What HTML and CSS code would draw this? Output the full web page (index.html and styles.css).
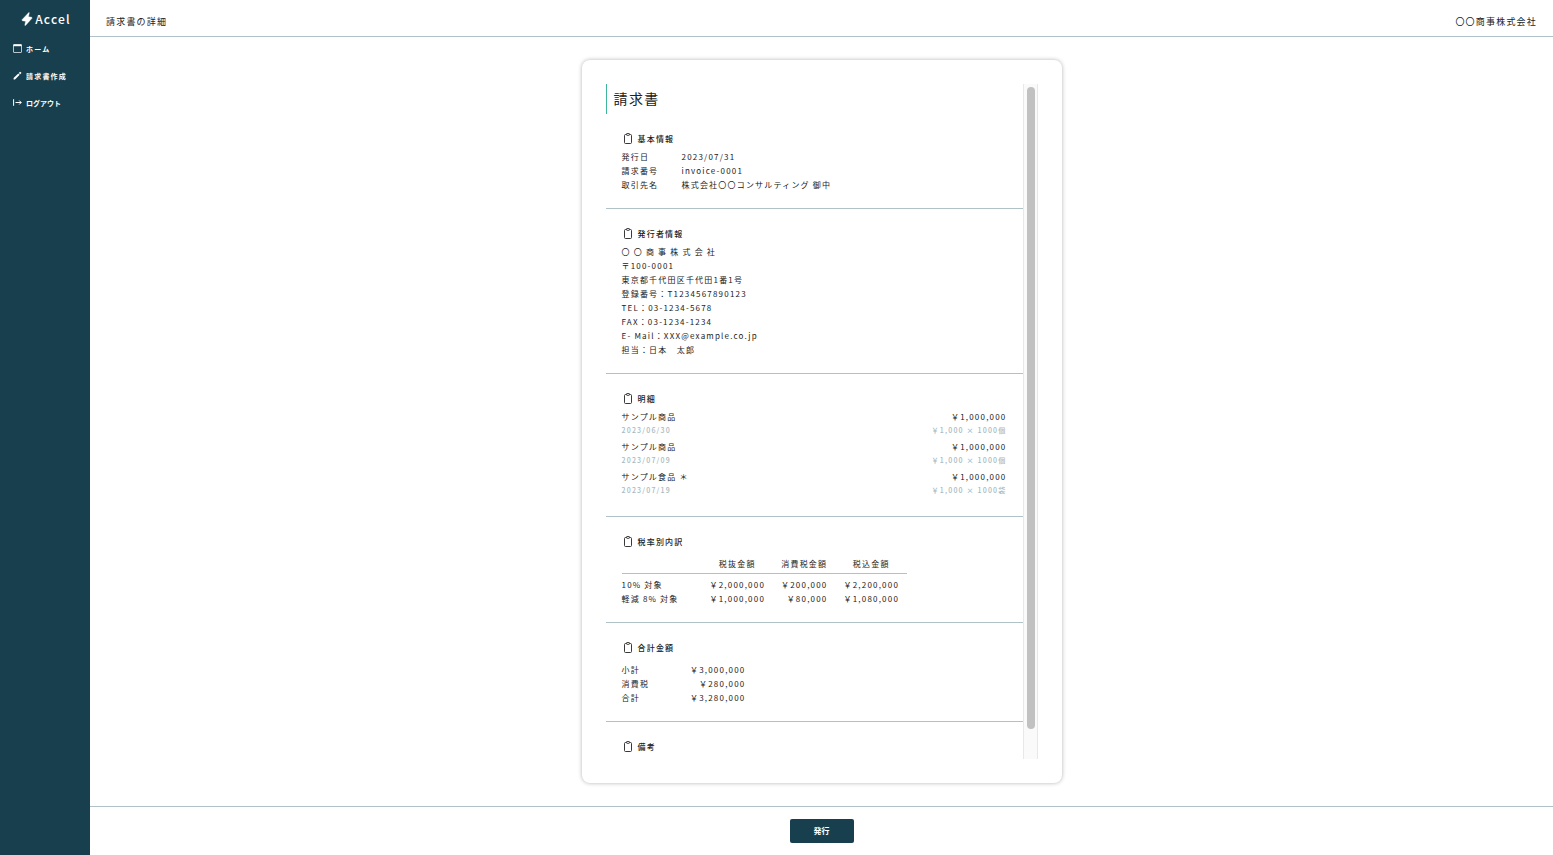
FILE: index.html
```html
<!DOCTYPE html>
<html lang="ja">
<head>
<meta charset="utf-8">
<title>請求書の詳細</title>
<link rel="stylesheet" href="styles.css">
</head>
<body>
<svg class="defs" aria-hidden="true">
  <symbol id="clipboard" viewBox="0 0 12 12">
    <path d="M4.300 1.500H3.500a1 1 0 0 0-1 1v7a1 1 0 0 0 1 1h5a1 1 0 0 0 1-1v-7a1 1 0 0 0-1-1H7.700M4.500 1.100a.6.6 0 0 1 .6-.6h1.800a.6.6 0 0 1 .6.6v.6a.6.6 0 0 1-.6.6H5.100a.6.6 0 0 1-.6-.6z" fill="none" stroke="currentColor" stroke-width=".9"/>
  </symbol>
</svg>
<div class="app">
  <aside class="sidebar">
    <a class="logo" href="#">
      <svg class="logo-mark" viewBox="0 0 12 14"><path d="M7.800.5 1 7.700l.2 1 3.400.6-.8 4L4.500 13.500 11 6.300l-.2-1-3.300-.6.8-4z" fill="currentColor" stroke="currentColor" stroke-width=".4" stroke-linejoin="round"/></svg>
      <span>Accel</span>
    </a>
    <nav class="nav">
      <a class="nav-item" href="#">
        <svg class="nav-icon" viewBox="0 0 9 9"><path d="M1 .5h7a.5.5 0 0 1 .5.5v7a.5.5 0 0 1-.5.5H1A.5.5 0 0 1 .5 8V1A.5.5 0 0 1 1 .5z" fill="none" stroke="currentColor" stroke-width=".7"/><path d="M.5.500h8v1.700h-8z" fill="currentColor"/></svg>
        <span>ホーム</span>
      </a>
      <a class="nav-item" href="#">
        <svg class="nav-icon" viewBox="0 0 9 9"><path d="M.6 8.500V7.100l4.700-4.700 1.400 1.400L2 8.500zM5.800 1.900l1-1a.5.5 0 0 1 .7 0l.7.7a.5.5 0 0 1 0 .7l-1 1z" fill="currentColor"/></svg>
        <span>請求書作成</span>
      </a>
      <button class="nav-item nav-button" type="button">
        <svg class="nav-icon" viewBox="0 0 9 9"><path d="M.6 1.200v6.600M2.500 4.500h5.700M6.200 2.500l2 2-2 2" fill="none" stroke="currentColor"/></svg>
        <span>ログアウト</span>
      </button>
    </nav>
  </aside>
  <div class="page">
    <header class="topbar">
      <span>請求書の詳細</span>
      <span>〇〇商事株式会社</span>
    </header>
    <main class="main">
      <article class="card">
        <div class="scroll">
          <h1 class="title">請求書</h1>
          <section class="section">
            <h2 class="heading"><svg class="icon"><use href="#clipboard"/></svg>基本情報</h2>
            <dl class="pairs">
              <dt>発行日</dt><dd>2023/07/31</dd>
              <dt>請求番号</dt><dd>invoice-0001</dd>
              <dt>取引先名</dt><dd>株式会社〇〇コンサルティング 御中</dd>
            </dl>
          </section>
          <section class="section">
            <h2 class="heading"><svg class="icon"><use href="#clipboard"/></svg>発行者情報</h2>
            <p>〇 〇 商 事 株 式 会 社</p>
            <p>〒100-0001</p>
            <p>東京都千代田区千代田1番1号</p>
            <p>登録番号：T1234567890123</p>
            <p>TEL：03-1234-5678</p>
            <p>FAX：03-1234-1234</p>
            <p>E- Mail：XXX@example.co.jp</p>
            <p>担当：日本　太郎</p>
          </section>
          <section class="section">
            <h2 class="heading"><svg class="icon"><use href="#clipboard"/></svg>明細</h2>
            <ul class="items">
              <li class="item">
                <div class="line"><span>サンプル商品</span><span>￥1,000,000</span></div>
                <div class="line sub"><span>2023/06/30</span><span>￥1,000 × 1000個</span></div>
              </li>
              <li class="item">
                <div class="line"><span>サンプル商品</span><span>￥1,000,000</span></div>
                <div class="line sub"><span>2023/07/09</span><span>￥1,000 × 1000個</span></div>
              </li>
              <li class="item">
                <div class="line"><span>サンプル食品 ＊</span><span>￥1,000,000</span></div>
                <div class="line sub"><span>2023/07/19</span><span>￥1,000 × 1000袋</span></div>
              </li>
            </ul>
          </section>
          <section class="section">
            <h2 class="heading"><svg class="icon"><use href="#clipboard"/></svg>税率別内訳</h2>
            <table class="tax">
              <thead>
                <tr><td></td><th scope="col">税抜金額</th><th scope="col">消費税金額</th><th scope="col">税込金額</th></tr>
              </thead>
              <tbody>
                <tr><th scope="row">10% 対象</th><td>￥2,000,000</td><td>￥200,000</td><td>￥2,200,000</td></tr>
                <tr><th scope="row">軽減 8% 対象</th><td>￥1,000,000</td><td>￥80,000</td><td>￥1,080,000</td></tr>
              </tbody>
            </table>
          </section>
          <section class="section">
            <h2 class="heading"><svg class="icon"><use href="#clipboard"/></svg>合計金額</h2>
            <dl class="pairs totals">
              <dt>小計</dt><dd>￥3,000,000</dd>
              <dt>消費税</dt><dd>￥280,000</dd>
              <dt>合計</dt><dd>￥3,280,000</dd>
            </dl>
          </section>
          <section class="section last">
            <h2 class="heading"><svg class="icon"><use href="#clipboard"/></svg>備考</h2>
          </section>
        </div>
        <div class="track"><div class="thumb"></div></div>
      </article>
    </main>
    <footer class="footer">
      <button class="issue" type="button">発行</button>
    </footer>
  </div>
</div>
</body>
</html>
```
FILE: styles.css
```css
* {
  box-sizing: border-box;
  margin: 0;
  padding: 0;
}

body {
  font-family: "Noto Sans CJK JP", sans-serif;
  font-size: 8px;
  line-height: 14px;
  letter-spacing: 0.15em;
  color: #222;
  background: #fff;
}

.defs {
  display: none;
}

.app {
  display: flex;
  height: 100vh;
}

.sidebar {
  flex: none;
  width: 90px;
  background: #173f4e;
  color: #fff;
}

.logo {
  display: flex;
  align-items: center;
  justify-content: center;
  gap: 2px;
  height: 35px;
  padding: 2px 0 0 2px;
  font-size: 12px;
  font-weight: 500;
  letter-spacing: 0.1em;
  color: inherit;
  text-decoration: none;
}

.logo-mark {
  width: 12px;
  height: 14px;
}

.nav {
  display: flex;
  flex-direction: column;
}

.nav-item {
  display: flex;
  align-items: center;
  gap: 4px;
  height: 27px;
  padding-left: 13px;
  font-size: 7px;
  font-weight: 700;
  color: inherit;
  text-decoration: none;
}

.nav-button {
  border: 0;
  background: none;
  font-family: inherit;
  letter-spacing: normal;
  cursor: pointer;
}

.nav-icon {
  width: 9px;
  height: 9px;
}

.page {
  display: flex;
  flex: 1;
  flex-direction: column;
  min-width: 0;
}

.topbar {
  display: flex;
  align-items: center;
  justify-content: space-between;
  height: 37px;
  padding: 8px 16px 0;
  border-bottom: 1px solid #b0c2c8;
  font-size: 9px;
}

.main {
  display: flex;
  flex: 1;
  justify-content: center;
  min-height: 0;
  padding: 23px;
}

.card {
  display: flex;
  width: 480px;
  padding: 24px;
  border-radius: 8px;
  box-shadow: 0 0 4px rgba(0, 0, 0, 0.3);
}

.scroll {
  flex: 1;
  overflow-y: auto;
  scrollbar-width: none;
}

.track {
  width: 15px;
  padding: 3px;
  border: solid #e8e8e8;
  border-width: 0 1px;
  background: #fafafa;
}

.thumb {
  width: 8px;
  height: 96%;
  border-radius: 4px;
  background: #c1c1c1;
}

.title {
  padding: 0 0 2px 7px;
  border-left: 1px solid #3fb59d;
  font-size: 14px;
  font-weight: 400;
  line-height: 28px;
  letter-spacing: 0.1em;
}

.section {
  padding: 16px;
  border-bottom: 1px solid #b0c2c8;
}

.last {
  min-height: 60px;
  border-bottom: 0;
}

.heading {
  display: flex;
  align-items: center;
  gap: 4px;
  height: 18px;
  margin-bottom: 2px;
  font-size: 8px;
  font-weight: 500;
}

.icon {
  width: 12px;
  height: 12px;
}

.pairs {
  display: grid;
  grid-template-columns: 60px 1fr;
}

.totals {
  grid-template-columns: 60px 64px;
  padding-top: 4px;
  text-align: right;
}

.totals dt {
  text-align: left;
}

.items {
  list-style: none;
}

.item {
  padding-bottom: 4px;
}

.line {
  display: flex;
  justify-content: space-between;
}

.sub {
  font-size: 7px;
  line-height: 12px;
  font-weight: 500;
  color: #a6babf;
}

.tax {
  margin-top: 6px;
  border-collapse: collapse;
}

.tax th,
.tax td {
  padding: 0 8px;
  font-weight: 400;
  text-align: right;
}

.tax thead th {
  padding-bottom: 2px;
  text-align: center;
}

.tax thead tr {
  border-bottom: 1px solid #b0c2c8;
}

.tax tbody tr:first-child > * {
  padding-top: 4px;
}

.tax tr > :first-child {
  width: 80px;
  padding-left: 0;
  text-align: left;
}

.footer {
  display: flex;
  align-items: center;
  justify-content: center;
  height: 49px;
  border-top: 1px solid #b0c2c8;
}

.issue {
  width: 64px;
  height: 24px;
  padding-bottom: 2px;
  border: 0;
  border-radius: 2px;
  background: #173f4e;
  color: #fff;
  font-family: inherit;
  font-size: 8px;
  font-weight: 700;
  cursor: pointer;
}
```
